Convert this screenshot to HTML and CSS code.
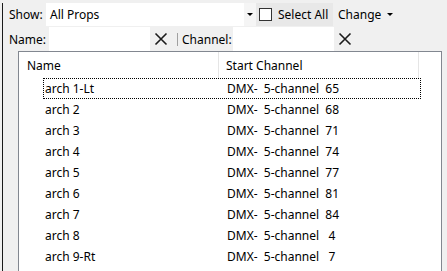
FILE: index.html
```html
<!DOCTYPE html>
<html lang="en">
<head>
    <meta charset="UTF-8">
    <title>Props</title>
    <link rel="stylesheet" href="styles.css">
</head>
<body>
    <div class="panel">
        <!-- filter bar -->
        <div class="bar bar-show">
            <span class="lbl lbl-show">Show:</span>
            <div class="combo">All Props</div>
            <div class="combo-arrow"><span class="tri"></span></div>
            <div class="selall"><span class="check"></span>Select All</div>
            <div class="change">Change<span class="tri"></span></div>
        </div>

        <div class="bar bar-find">
            <span class="lbl lbl-name">Name:</span>
            <div class="field"></div>
            <div class="clear">
                <svg width="14" height="14" viewBox="0 0 14 14"><path d="M1.5 1.5 L12.5 12.5 M12.5 1.5 L1.5 12.5" stroke="#1b1b1b" stroke-width="1.6" fill="none"/></svg>
            </div>
            <span class="sep"></span>
            <span class="lbl lbl-chan">Channel:</span>
            <div class="field"></div>
            <div class="clear">
                <svg width="14" height="14" viewBox="0 0 14 14"><path d="M1.5 1.5 L12.5 12.5 M12.5 1.5 L1.5 12.5" stroke="#1b1b1b" stroke-width="1.6" fill="none"/></svg>
            </div>
        </div>

        <!-- props list -->
        <div class="list">
            <div class="list-head">
                <div class="hcol hcol-name">Name</div>
                <div class="hcol hcol-chan">Start Channel</div>
            </div>
            <div class="rows" id="rows"></div>
        </div>
    </div>

    <script>
        const props = [
            ['arch 1-Lt', '65'],
            ['arch 2', '68'],
            ['arch 3', '71'],
            ['arch 4', '74'],
            ['arch 5', '77'],
            ['arch 6', '81'],
            ['arch 7', '84'],
            ['arch 8', ' 4'],
            ['arch 9-Rt', ' 7']
        ];

        const rows = document.getElementById('rows');
        props.forEach((p, i) => {
            rows.innerHTML += `
                <div class="row${i === 0 ? ' focus' : ''}">
                    <span class="cell-name">${p[0]}</span>
                    <span class="cell-chan">DMX-  5-channel  ${p[1]}</span>
                </div>
            `;
        });
    </script>
</body>
</html>
```

FILE: styles.css
```css
* {
    margin: 0;
    padding: 0;
    box-sizing: border-box;
}

body {
    background: #f0f0f0;
    color: #000;
    font-family: "Noto Sans", "Liberation Sans", sans-serif;
    font-size: 12px;
    overflow: hidden;
}

.panel {
    margin-left: 2px;
    height: 271px;
    border-left: 1px solid #1a1a1a;
}

/* toolbar rows */
.bar {
    display: flex;
    align-items: center;
}

.bar-show {
    margin-top: 3px;
    height: 23px;
}

.bar-find {
    margin-top: 1px;
    height: 24px;
}

.lbl {
    white-space: nowrap;
}

.lbl-show {
    width: 43px;
    padding-left: 6px;
}

.lbl-name {
    width: 46px;
    padding-left: 6px;
}

.lbl-chan {
    width: 51px;
    margin-left: 4px;
}

.combo {
    width: 198px;
    height: 23px;
    background: #fff;
    padding-left: 4px;
    display: flex;
    align-items: center;
}

.combo-arrow {
    width: 12px;
    height: 23px;
    background: #f5f5f5;
    display: flex;
    align-items: center;
    justify-content: center;
}

.tri {
    width: 0;
    height: 0;
    border-left: 3px solid transparent;
    border-right: 3px solid transparent;
    border-top: 3px solid #000;
}

.selall {
    width: 77px;
    height: 23px;
    background: #e8e8e8;
    display: flex;
    align-items: center;
    gap: 6px;
    padding-left: 3px;
}

.check {
    width: 13px;
    height: 13px;
    border: 1px solid #333;
    background: #fff;
}

.change {
    display: flex;
    align-items: center;
    padding-left: 5px;
    gap: 6px;
}

.field {
    width: 101px;
    height: 24px;
    background: #fff;
}

.clear {
    width: 22px;
    height: 24px;
    display: flex;
    align-items: center;
    justify-content: center;
}

.sep {
    width: 1px;
    height: 13px;
    margin-left: 5px;
    background: #a0a0a0;
}

/* list view */
.list {
    margin-left: 15px;
    width: 424px;
    height: 230px;
    background: #fff;
    border: 1px solid #828790;
    border-bottom: none;
}

.list-head {
    display: flex;
    height: 26px;
}

.hcol {
    border-right: 1px solid #e5e5e5;
    padding-top: 5px;
}

.hcol-name {
    width: 200px;
    padding-left: 8px;
}

.hcol-chan {
    width: 200px;
    padding-left: 7px;
}

.row {
    display: flex;
    align-items: center;
    height: 21px;
    margin-left: 24px;
    width: 378px;
    border: 1px dotted transparent;
    white-space: pre;
}

.row.focus {
    border-color: #000;
}

.cell-name {
    width: 183px;
    padding-left: 1px;
}
```
